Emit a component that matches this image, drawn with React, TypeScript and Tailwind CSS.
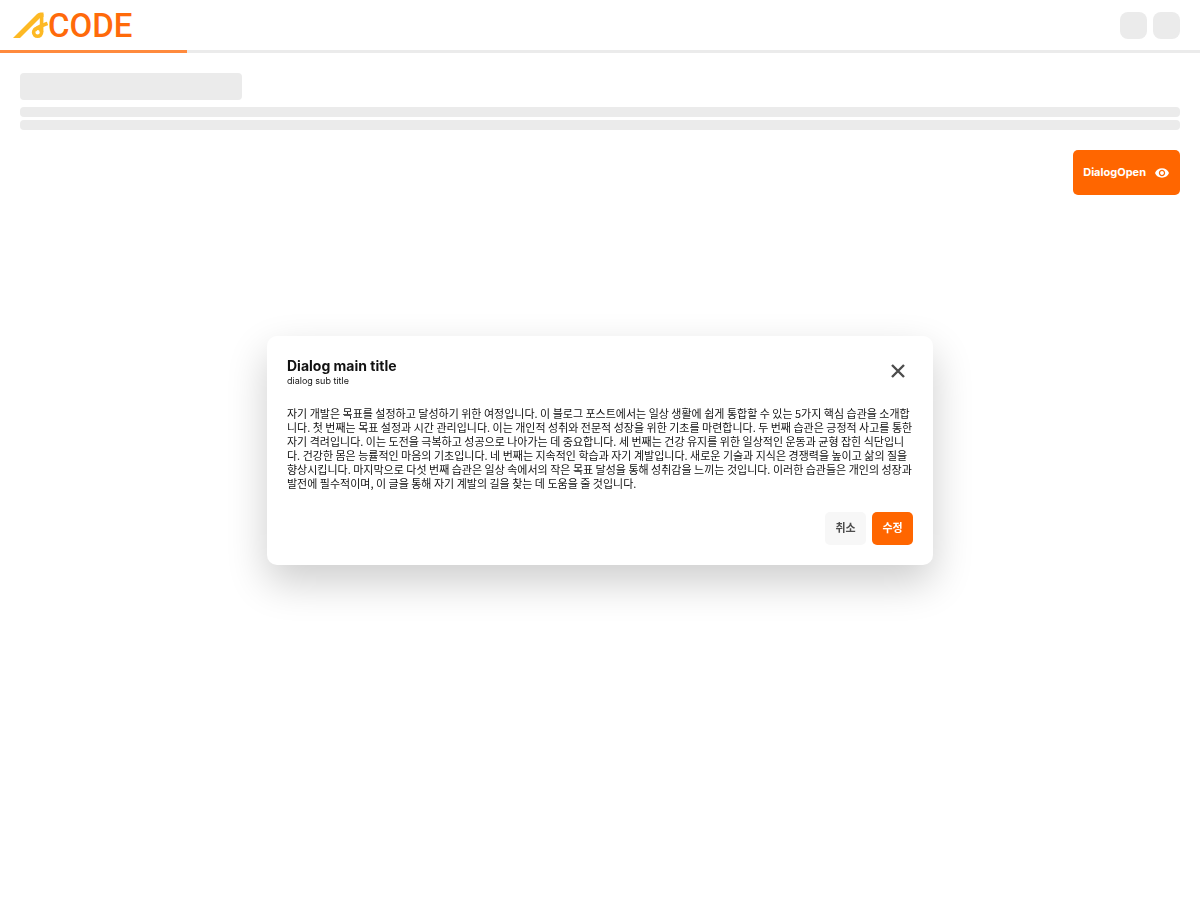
import React from 'react';
import { IoMdEye } from 'react-icons/io';

const PARAGRAPH = [
  '자기 개발은 목표를 설정하고 달성하기 위한 여정입니다. 이 블로그 포스트에서는 일상 생활에 쉽게 통합할 수 있는 5가지 핵심 습관을 소개합',
  '니다. 첫 번째는 목표 설정과 시간 관리입니다. 이는 개인적 성취와 전문적 성장을 위한 기초를 마련합니다. 두 번째 습관은 긍정적 사고를 통한',
  '자기 격려입니다. 이는 도전을 극복하고 성공으로 나아가는 데 중요합니다. 세 번째는 건강 유지를 위한 일상적인 운동과 균형 잡힌 식단입니',
  '다. 건강한 몸은 능률적인 마음의 기초입니다. 네 번째는 지속적인 학습과 자기 계발입니다. 새로운 기술과 지식은 경쟁력을 높이고 삶의 질을',
  '향상시킵니다. 마지막으로 다섯 번째 습관은 일상 속에서의 작은 목표 달성을 통해 성취감을 느끼는 것입니다. 이러한 습관들은 개인의 성장과',
  '발전에 필수적이며, 이 글을 통해 자기 계발의 길을 찾는 데 도움을 줄 것입니다.',
];

const Logo = () => (
  <a href="#" aria-label="ACODE" className="flex items-center">
    <svg width="36" height="28" viewBox="0 0 36 28" fill="none">
      <path d="M1 27 L25 3 Q26.5 1.5 28.5 1.5 H31.500 V6 H29 L8 27 Z" fill="#fdb924" />
      <g stroke="#fdb924" strokeWidth="3.6">
        <path d="M29.600 3 V21" />
        <circle cx="25.6" cy="21.3" r="4" />
        <path d="M22.500 19.500 C24.500 16 30 14.500 35.500 12.500" />
      </g>
    </svg>
    <span className="pt-0.5 font-[Roboto] text-[33px] leading-7 font-medium text-[#ff6a0a]">CODE</span>
  </a>
);

const CloseIcon = () => (
  <svg width="22" height="22" viewBox="0 0 22 22" stroke="currentColor" strokeWidth="2.4">
    <path d="M5 5 L17 17 M17 5 L5 17" />
  </svg>
);

const Header = () => (
  <header>
    <div className="flex h-[50px] items-center justify-between pr-5 pl-3">
      <Logo />
      <div className="flex gap-1.5">
        <div className="size-[27px] rounded-lg bg-[#ebebeb]" />
        <div className="size-[27px] rounded-lg bg-[#ebebeb]" />
      </div>
    </div>
    <div className="h-[3px] bg-[#ebebeb]">
      <div className="h-full w-[187px] bg-[#ff8a3d]" />
    </div>
  </header>
);

const Dialog = () => (
  <div className="fixed inset-0 flex items-center justify-center">
    <section
      role="dialog"
      aria-labelledby="dialog-title"
      aria-describedby="dialog-body"
      className="w-[666px] max-w-full rounded-[10px] bg-white p-5 shadow-[0_17px_40px_rgba(0,0,0,0.2)]"
    >
      <div className="flex items-center justify-between">
        <div>
          <h2 id="dialog-title" className="text-[14px] leading-5 font-bold">Dialog main title</h2>
          <p className="text-[9px] leading-[10px]">dialog sub title</p>
        </div>
        <button type="button" aria-label="Close" className="p-1 text-[#4d4d4d]">
          <CloseIcon />
        </button>
      </div>
      <p id="dialog-body" className="mt-5 font-['Noto_Sans_CJK_KR',sans-serif] text-[11px] leading-[14px]">
        {PARAGRAPH.map((line) => (
          <span key={line} className="block whitespace-nowrap">{line}</span>
        ))}
      </p>
      <div className="mt-[22px] flex justify-end gap-1.5">
        <button type="button" className="h-[33px] w-[41px] rounded-[5px] bg-[#f7f7f7] text-[11px] font-bold text-[#4d4d4d]">취소</button>
        <button type="button" className="h-[33px] w-[41px] rounded-[5px] bg-[#ff6600] text-[11px] font-bold text-white">수정</button>
      </div>
    </section>
  </div>
);

export default function App() {
  return (
    <div className="min-h-screen bg-white font-[Inter,'Noto_Sans_CJK_KR',sans-serif] text-[#111111]">
      <Header />
      <main className="flex flex-col p-5">
        <div className="h-[27px] w-[222px] rounded bg-[#ebebeb]" />
        <div className="mt-[7px] h-[10px] rounded bg-[#ebebeb]" />
        <div className="mt-[3px] h-[10px] rounded bg-[#ebebeb]" />
        <button type="button" className="mt-5 flex h-[45px] items-center gap-2 self-end rounded-[5px] bg-[#ff6600] px-[10px] text-[11px] font-bold text-white">
          DialogOpen
          <IoMdEye size={16} />
        </button>
      </main>
      <Dialog />
    </div>
  );
}
